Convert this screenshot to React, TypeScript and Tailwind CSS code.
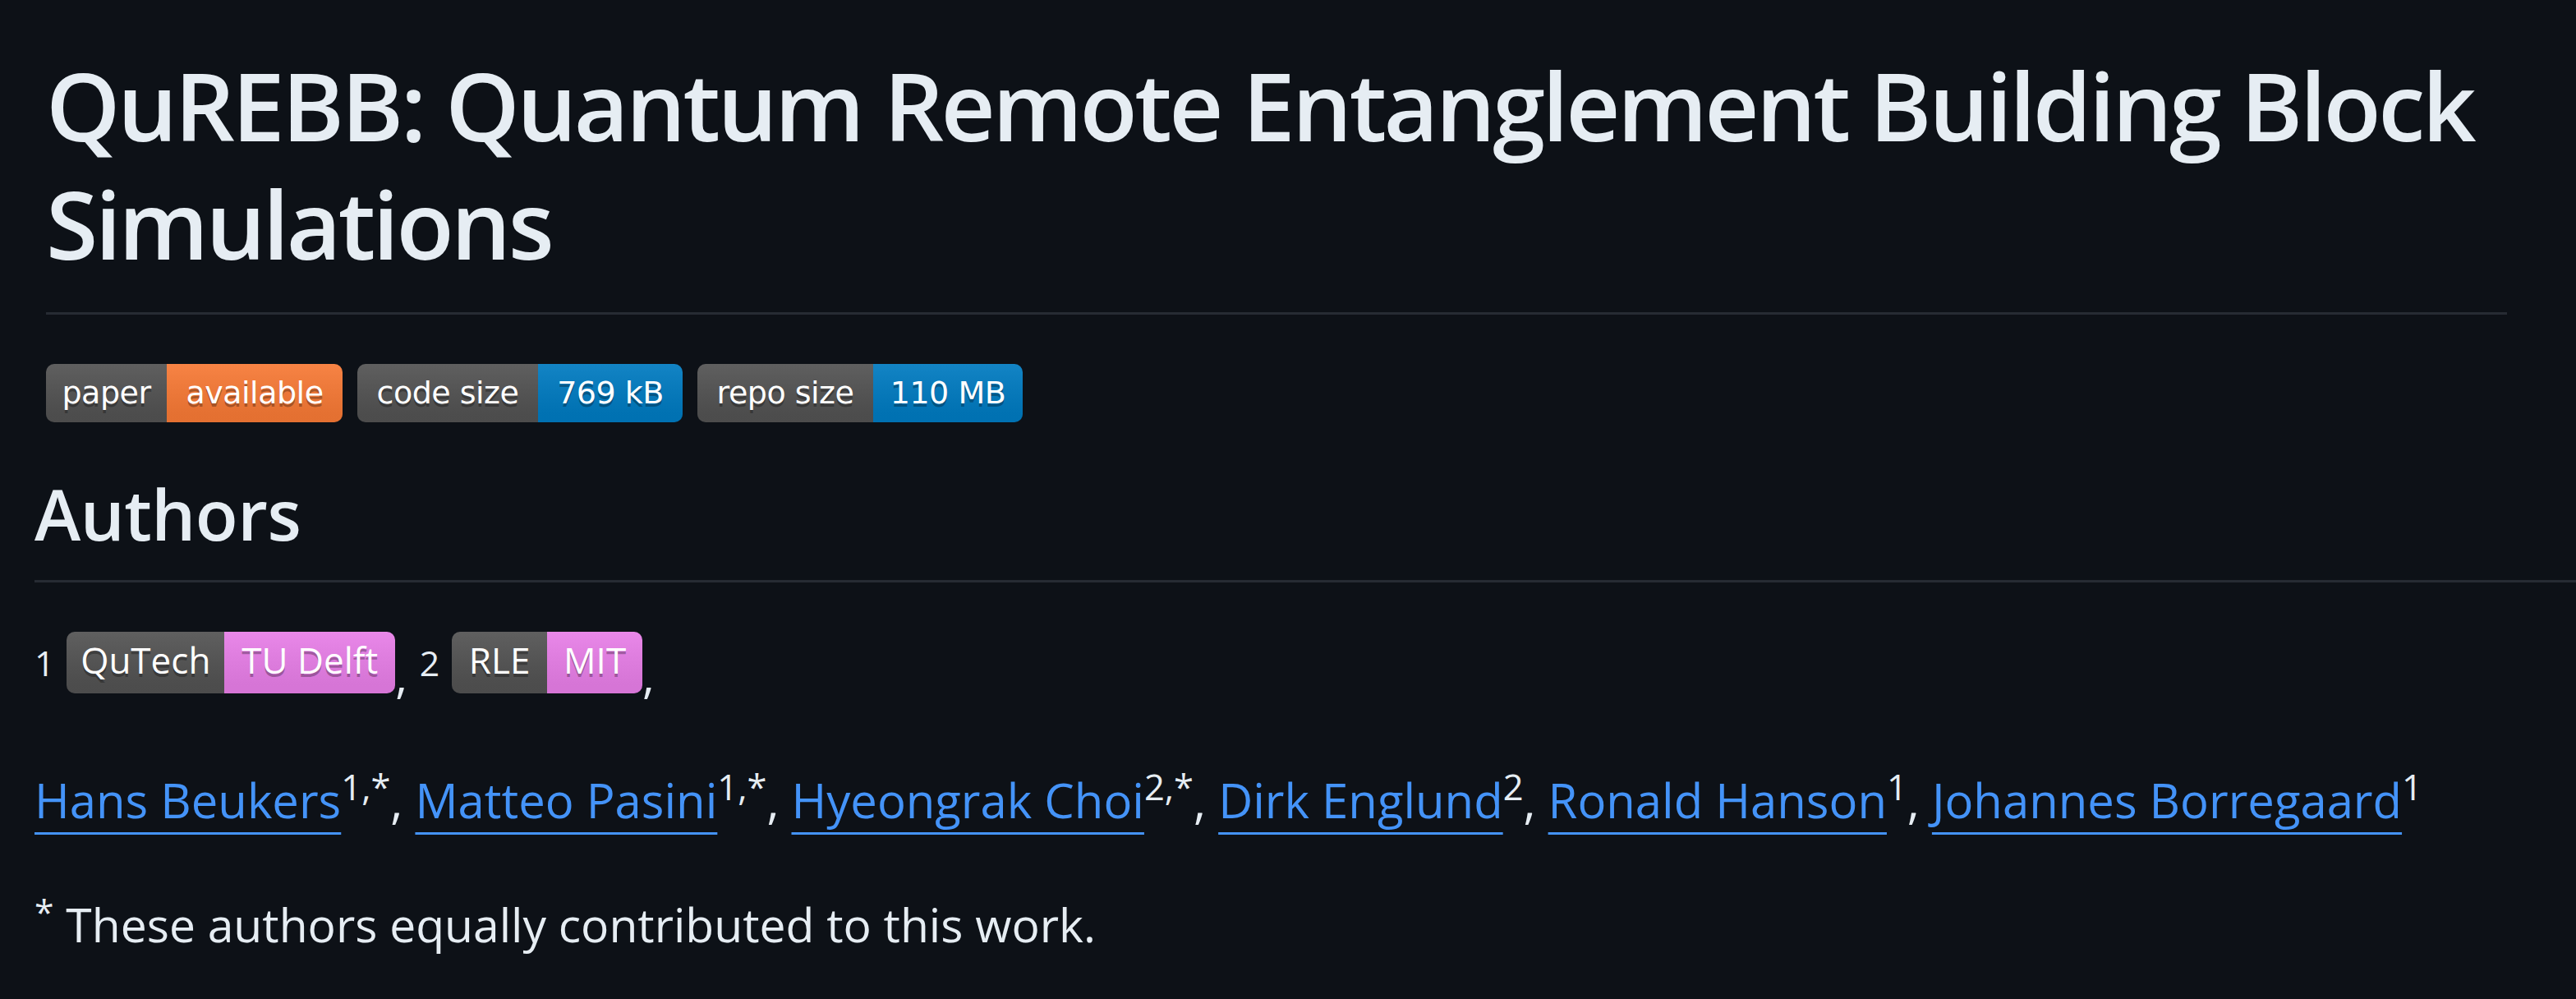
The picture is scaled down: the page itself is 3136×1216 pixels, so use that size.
import React from "react";

type Shield = {
  label: string;
  value: string;
  labelWidth: number;
  valueWidth: number;
  color: string;
};

const shields: Shield[] = [
  { label: "paper", value: "available", labelWidth: 147, valueWidth: 214, color: "bg-[#fe7d37]" },
  { label: "code size", value: "769 kB", labelWidth: 220, valueWidth: 176, color: "bg-[#007ec6]" },
  { label: "repo size", value: "110 MB", labelWidth: 214, valueWidth: 182, color: "bg-[#007ec6]" },
];

const authors = [
  { name: "Hans Beukers", sup: "1,*" },
  { name: "Matteo Pasini", sup: "1,*" },
  { name: "Hyeongrak Choi", sup: "2,*" },
  { name: "Dirk Englund", sup: "2" },
  { name: "Ronald Hanson", sup: "1" },
  { name: "Johannes Borregaard", sup: "1" },
];

// shields.io "flat" look: dark label + coloured value, soft vertical gloss
const ShieldBadge = ({ shield }: { shield: Shield }) => (
  <div className="flex h-[71px] overflow-hidden rounded-[10px] font-['DejaVu_Sans',Verdana,sans-serif] text-[38px] leading-[71px] text-white [text-shadow:0_4px_0_rgba(1,1,1,0.3)]">
    <span
      className="flex justify-center bg-[#555555] bg-linear-to-b from-[#bbbbbb1a] to-[#0000001a] tracking-[-0.5px]"
      style={{ width: shield.labelWidth }}
    >
      {shield.label}
    </span>
    <span
      className={`flex justify-center bg-linear-to-b from-[#bbbbbb1a] to-[#0000001a] tracking-[-0.5px] ${shield.color}`}
      style={{ width: shield.valueWidth }}
    >
      {shield.value}
    </span>
  </div>
);

type Props = {
  label: string;
  value: string;
  labelWidth: number;
  valueWidth: number;
};

const AffiliationBadge = ({ label, value, labelWidth, valueWidth }: Props) => (
  <span className="inline-block overflow-hidden rounded-[10px] align-baseline">
    <span className="flex h-[75px] text-[44px] leading-[68px] text-white [text-shadow:0_4px_0_rgba(1,1,1,0.3)]">
      <span
        className="flex justify-center bg-[#555555] bg-linear-to-b from-[#bbbbbb1a] to-[#0000001a]"
        style={{ width: labelWidth }}
      >
        {label}
      </span>
      <span
        className="flex justify-center bg-[#ee82ee] bg-linear-to-b from-[#bbbbbb1a] to-[#0000001a]"
        style={{ width: valueWidth }}
      >
        {value}
      </span>
    </span>
  </span>
);

export default function App() {
  return (
    <div className="min-h-screen w-full overflow-hidden bg-[#0d1117] font-['Open_Sans',sans-serif] text-[#e6edf3]">
      <div className="pl-[56px] pr-[84px] pt-[56px]">
        <h1 className="border-b-[3px] border-[#262b33] pb-[36px] text-[115px] font-semibold leading-[144px] tracking-[-3.5px]">
          QuREBB: Quantum Remote Entanglement Building Block Simulations
        </h1>
        <div className="mt-[60px] flex gap-[18px]">
          {shields.map((s) => (
            <ShieldBadge key={s.label} shield={s} />
          ))}
        </div>
      </div>

      <div className="pl-[42px]">
        <h2 className="mt-[58px] border-b-[3px] border-[#262b33] pb-[28px] text-[85px] font-semibold leading-[106px] tracking-[-0.5px]">
          Authors
        </h2>

        <p className="mt-[60px] text-[57px] leading-[85px]">
          <sup>1</sup>{" "}
          <AffiliationBadge label="QuTech" value="TU Delft" labelWidth={192} valueWidth={208} />
          , <sup>2</sup>{" "}
          <AffiliationBadge label="RLE" value="MIT" labelWidth={116} valueWidth={116} />,
        </p>

        <p className="mt-[66px] text-[58px] leading-[85px]">
          {authors.map((a, i) => (
            <React.Fragment key={a.name}>
              <a
                href="#"
                className="text-[#4493f8] underline decoration-[3px] underline-offset-[17px]"
              >
                {a.name}
              </a>
              <sup>{a.sup}</sup>
              {i < authors.length - 1 ? ", " : ""}
            </React.Fragment>
          ))}
        </p>

        <p className="mt-[67px] text-[57px] leading-[85px]">
          <sup>*</sup> These authors equally contributed to this work.
        </p>
      </div>
    </div>
  );
}
